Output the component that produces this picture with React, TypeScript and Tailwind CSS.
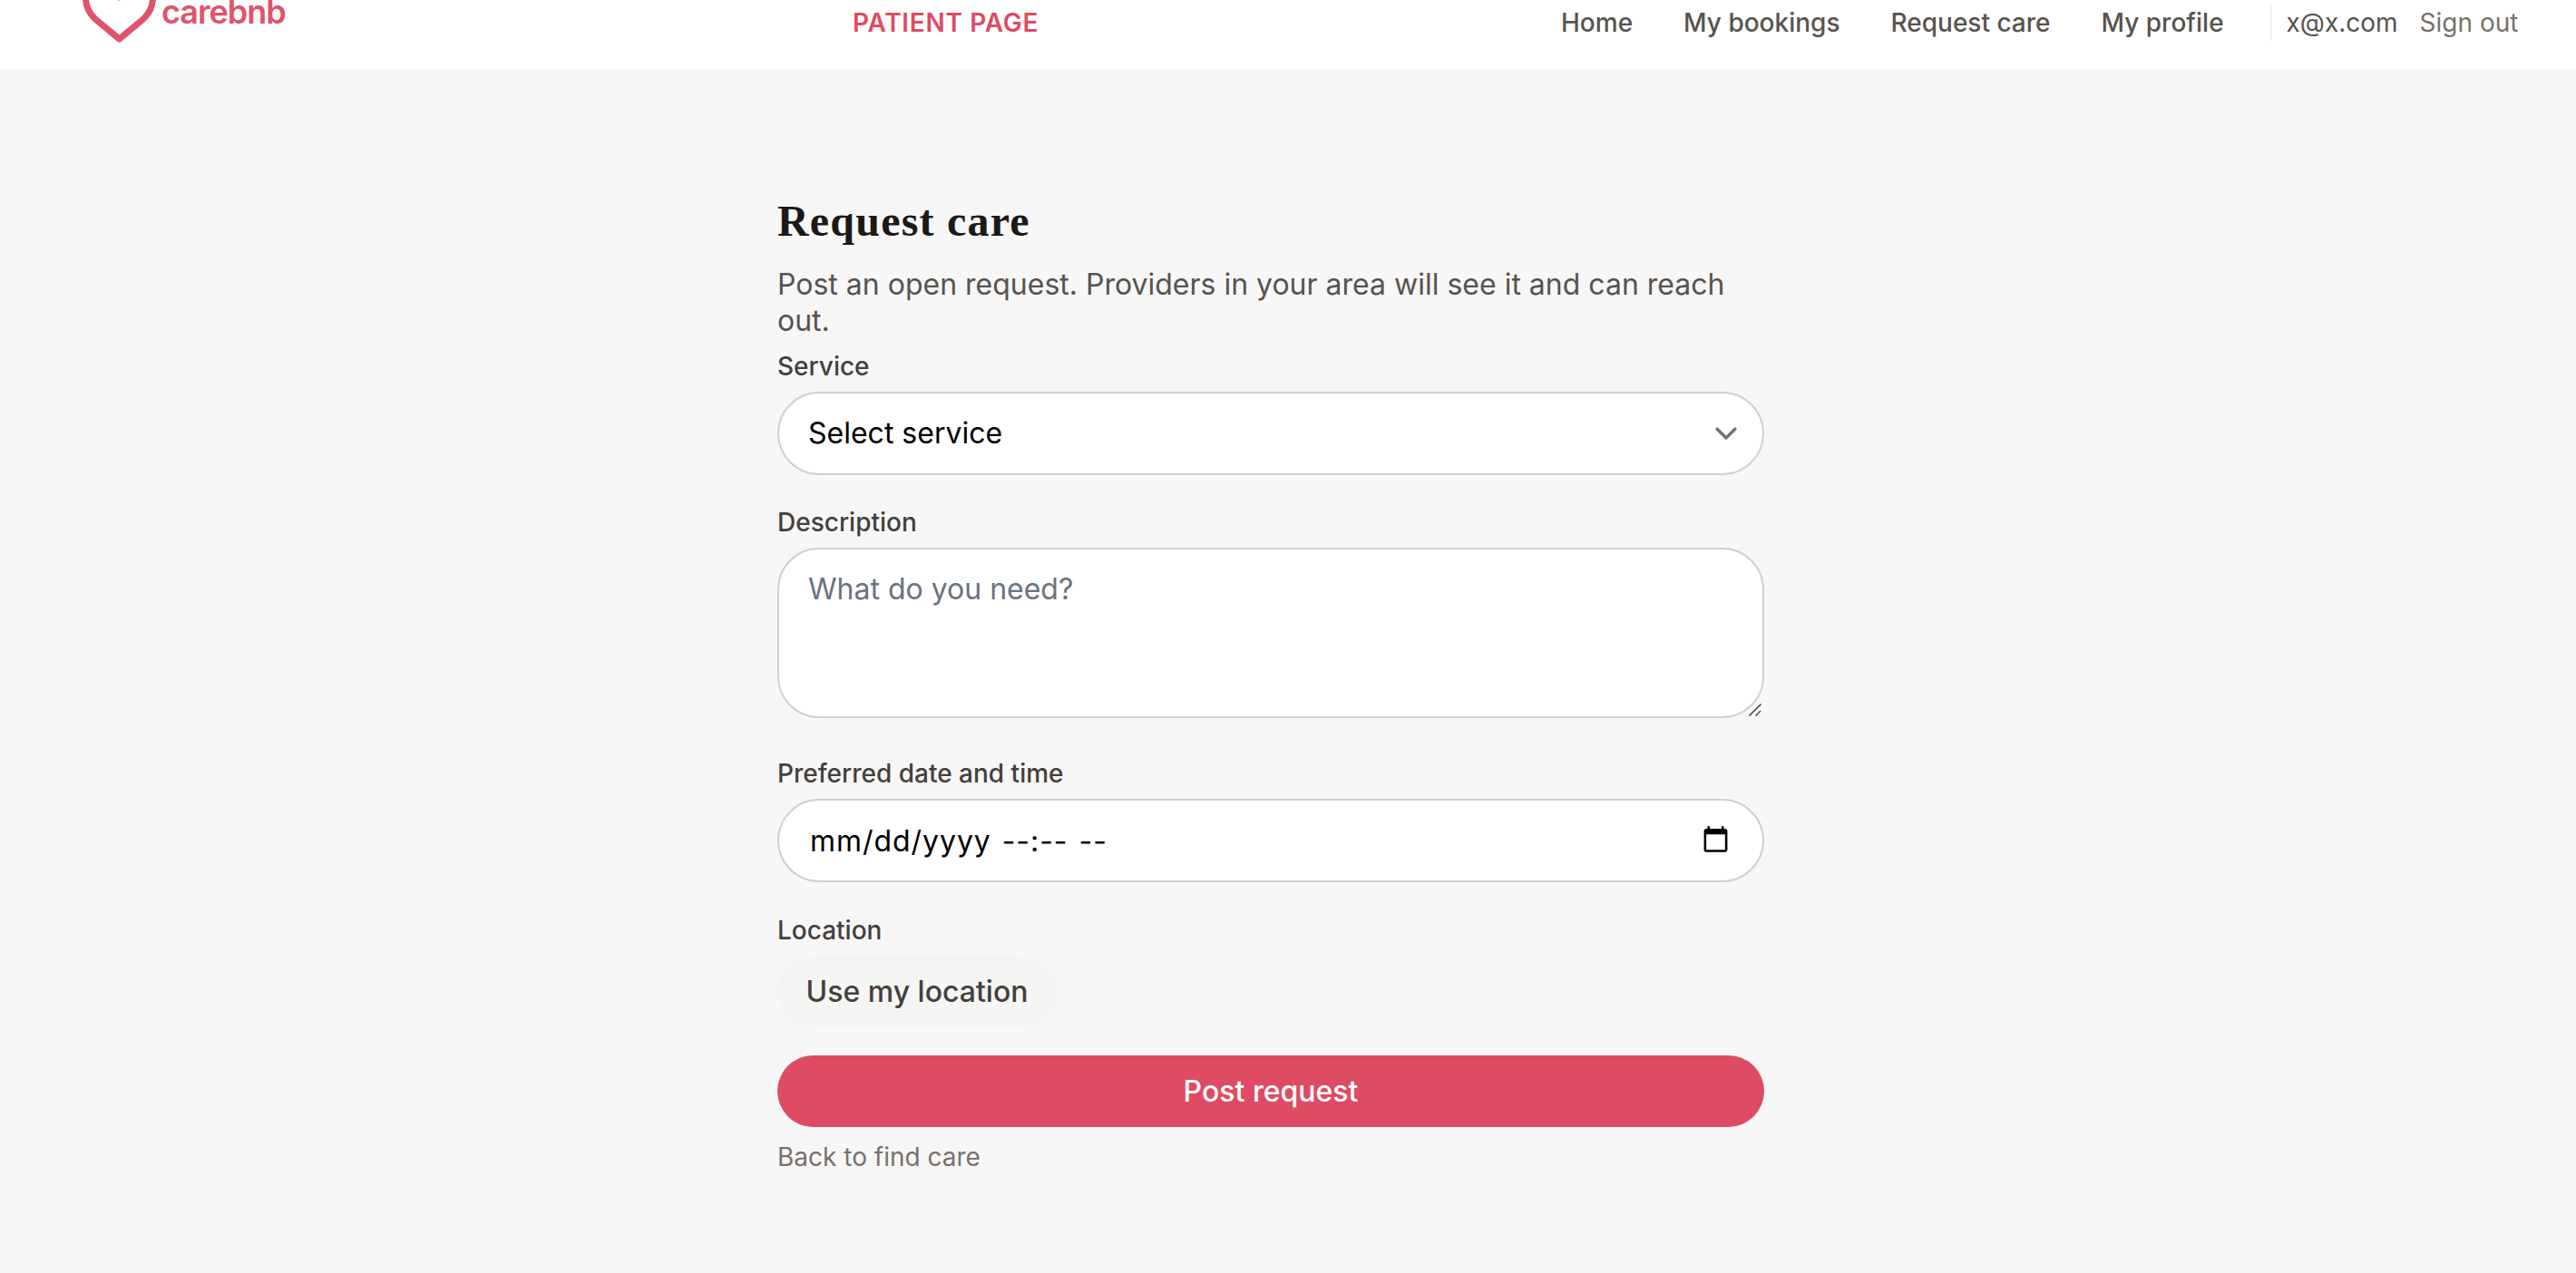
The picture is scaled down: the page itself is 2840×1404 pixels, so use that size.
export default function App() {
  const label = "block text-[28px] leading-[40px] font-medium text-[#44403c]";
  return (
    <div className="min-h-[1404px] bg-[#f7f7f7] font-['Inter',sans-serif] overflow-hidden">
      <header className="h-[76px] bg-white overflow-hidden flex items-start relative">
        <div className="flex items-start ml-[91px] w-[849px]">
          <svg viewBox="0 0 81 72" className="w-[81px] h-[72px] mt-[-25px] shrink-0" fill="none" stroke="#e0536b" strokeWidth="7" strokeLinejoin="round">
            <path d="M40.5 68 L14 46 C7 39.5 3.5 32 3.5 22 C3.5 11 12 3.5 22 3.5 C31 3.5 37 11 40.5 22 C44 11 50 3.5 59 3.5 C69 3.5 77.5 11 77.5 22 C77.5 32 74 39.5 67 46 Z" />
          </svg>
          <span className="ml-[6px] mt-[-9px] text-[36px] leading-[44px] font-semibold tracking-[-1px] text-[#e0536b]">carebnb</span>
        </div>
        <div className="w-[781px] text-[28px] leading-[50px] font-semibold tracking-[0.7px] text-[#dd4c63]">PATIENT PAGE</div>
        <nav className="flex gap-[56px] text-[28px] leading-[50px] font-medium text-[#57534e]">
          <a>Home</a>
          <a>My bookings</a>
          <a>Request care</a>
          <a>My profile</a>
        </nav>
        <div className="ml-[51px] mt-[5px] h-[40px] border-l-2 border-[#f2f2f2]" />
        <span className="ml-[16px] text-[28px] leading-[50px] text-[#57534e]">x@x.com</span>
        <span className="ml-[24px] text-[28px] leading-[50px] text-[#78716c]">Sign out</span>
      </header>
      <main className="w-[1088px] ml-[857px] pt-[138px]">
        <h1 className="font-['Liberation_Serif',serif] text-[48px] tracking-[1.2px] leading-[60px] font-bold text-[#1c1917]">Request care</h1>
        <p className="mt-[20px] text-[32px] leading-[40px] text-[#57534e]">Post an open request. Providers in your area will see it and can reach out.</p>
        <label className={label + " mt-[10px] mb-[8px]"}>Service</label>
        <div className="relative">
          <select className="block w-full h-[92px] appearance-none rounded-[46px] border-2 border-[#d1d1d1] bg-white px-[32px] text-[32px] text-black outline-none">
            <option>Select service</option>
          </select>
          <svg viewBox="0 0 24 24" className="absolute right-[22px] top-[26px] w-[40px] h-[40px] pointer-events-none" fill="none" stroke="#6b7280" strokeWidth="2" strokeLinecap="round" strokeLinejoin="round">
            <path d="M6 9l6 6 6-6" />
          </svg>
        </div>
        <label className={label + " mt-[32px] mb-[8px]"}>Description</label>
        <div className="relative">
          <textarea rows={3} placeholder="What do you need?" className="block w-full h-[188px] resize-none rounded-[46px] border-2 border-[#d1d1d1] bg-white px-[32px] py-[24px] text-[32px] leading-[40px] text-black placeholder:text-[#6b7280] outline-none" />
          <svg viewBox="0 0 14 14" className="absolute right-[3px] bottom-[2px] w-[14px] h-[14px] pointer-events-none" fill="none" stroke="#555" strokeWidth="1.6">
            <path d="M13.5 0.5L0.5 13.5M13 8L7.5 13.5" />
          </svg>
        </div>
        <label className={label + " mt-[41px] mb-[8px]"}>Preferred date and time</label>
        <div className="relative">
          <input type="text" readOnly defaultValue="mm/dd/yyyy --:-- --" className="block w-full h-[92px] rounded-[46px] border-2 border-[#d1d1d1] bg-white pl-[34px] pr-[32px] text-[32px] tracking-[0.95px] [word-spacing:2px] text-black outline-none" />
          <svg viewBox="0 0 24 24" className="absolute right-[38px] top-[29px] w-[31px] h-[31px] pointer-events-none" fill="#000">
            <path d="M20 3h-1V1h-2v2H7V1H5v2H4c-1.1 0-2 .9-2 2v16c0 1.1.9 2 2 2h16c1.1 0 2-.9 2-2V5c0-1.1-.9-2-2-2zm0 18H4V8h16v13z" />
          </svg>
        </div>
        <label className={label + " mt-[33px] mb-[8px]"}>Location</label>
        <button className="block h-[79px] w-[308px] rounded-[40px] bg-[#f5f5f4] text-[32px] font-medium text-[#44403c]">Use my location</button>
        <button className="block mt-[31px] h-[79px] w-full rounded-[40px] bg-[#dd4c63] text-[32px] font-medium text-white">Post request</button>
        <a className="block mt-[13px] text-[28px] leading-[40px] text-[#78716c]">Back to find care</a>
      </main>
    </div>
  );
}
